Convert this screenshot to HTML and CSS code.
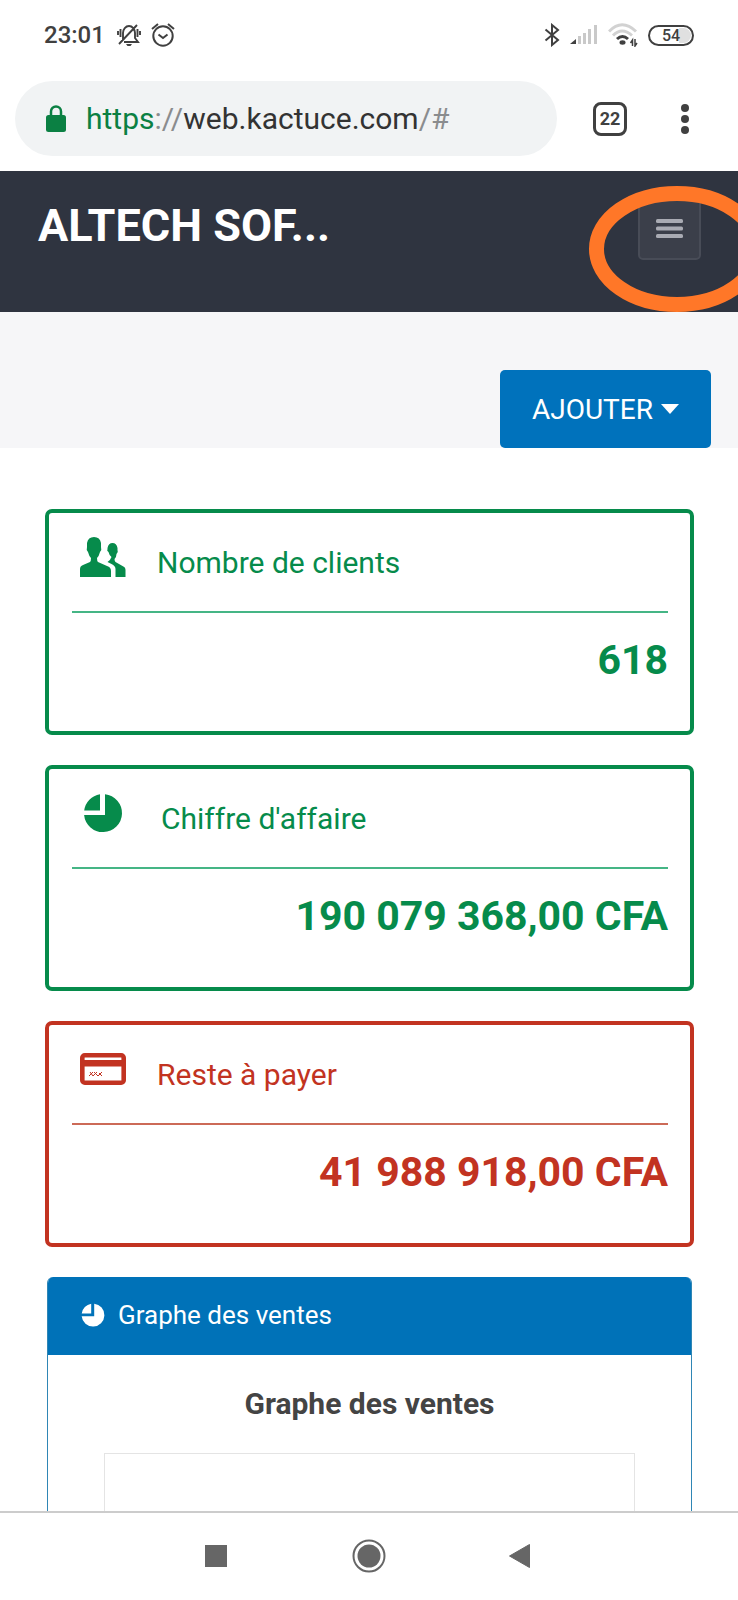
FILE: index.html
```html
<!DOCTYPE html>
<html lang="fr">
<head>
<meta charset="utf-8">
<meta name="viewport" content="width=device-width, initial-scale=1">
<title>ALTECH SOF...</title>
<link rel="stylesheet" href="styles.css">
</head>
<body>
<div class="status">
  <time class="clock">23:01</time>
  <svg class="bell" width="24" height="24" viewBox="0 0 24 24" fill="none" stroke="#404040" stroke-width="2">
    <path d="M6 18V10a6 7 0 0 1 12 0v5l3 4H7M1 8v4M3.500 6v8M20.500 6v8M23 8v4M2 21L20 2" stroke-width="1.900"/>
    <path d="M9 21h6l-1.500 2h-3z" fill="#404040" stroke="none"/>
  </svg>
  <svg class="alarm" width="24" height="24" viewBox="0 0 24 24" fill="none" stroke="#404040" stroke-width="2">
    <circle cx="12" cy="13" r="9.700"/>
    <path d="M1 6L7 1M17 1l6 5M7.500 11.500l4.500 3.500 4.500-3.500"/>
  </svg>
  <span class="status-gap"></span>
  <svg width="16" height="24" viewBox="0 0 16 24" fill="none" stroke="#404040" stroke-width="2">
    <path d="M1.500 6.500L14 17l-6 5V2l6 5L1.500 17.500"/>
  </svg>
  <svg class="signal" width="28" height="24" viewBox="0 0 28 24">
    <path fill="#404040" d="M0 21l6-5v5z"/>
    <path fill="#c9c9c9" d="M8 13h3v8H8zM13 10h3v11h-3zM18 6h3v15h-3zM24 2h3v19h-3z"/>
  </svg>
  <svg class="wifi" width="30" height="24" viewBox="0 0 30 24" fill="none">
    <path d="M1 8.500Q14-5 28 8.500M5 12.500Q14 3.500 24 12.500" stroke="#d2d2d2" stroke-width="3"/>
    <path d="M9 16Q14.500 11 20 16" stroke="#404040" stroke-width="3"/>
    <ellipse cx="14.500" cy="19.500" rx="3" ry="2.200" fill="#404040"/>
    <path d="M24.500 23v-6l-2 3M27 16v7l2-3" stroke="#404040" stroke-width="1.500"/>
  </svg>
  <span class="battery">54</span>
</div>
<div class="browser-bar">
  <a class="address" href="#">
    <svg width="20" height="27" viewBox="0 0 20 27">
      <rect y="10" width="20" height="17" rx="2.500" fill="#0b8043"/>
      <path d="M5 11V6.500a5 5 0 0 1 10 0V11" fill="none" stroke="#0b8043" stroke-width="2.500"/>
    </svg>
    <span><span class="scheme">https</span><span class="dim">://</span>web.kactuce.com<span class="dim">/#</span></span>
  </a>
  <button class="tabs" type="button" aria-label="Onglets">22</button>
  <button class="more" type="button" aria-label="Plus">
    <svg width="8" height="32" viewBox="0 0 8 32" fill="#404040"><circle cx="4" cy="5" r="4"/><circle cx="4" cy="16" r="4"/><circle cx="4" cy="27" r="4"/></svg>
  </button>
</div>
<header class="header">
  <h1 class="brand">ALTECH SOF...</h1>
  <div class="menu-wrap">
    <button class="menu" type="button" aria-label="Menu">
      <svg width="27" height="20" viewBox="0 0 27 20" fill="#a9abb3"><rect width="27" height="4" rx="1.500"/><rect y="7.500" width="27" height="4" rx="1.500"/><rect y="15" width="27" height="4" rx="1.500"/></svg>
    </button>
    <svg class="ring" width="176" height="126" viewBox="0 0 176 126"><ellipse cx="88" cy="63" rx="80.500" ry="55.500" fill="none" stroke="#ff7728" stroke-width="15"/></svg>
  </div>
</header>
<div class="toolbar">
  <button class="add" type="button">AJOUTER<svg width="18" height="10" viewBox="0 0 18 10"><path fill="#fff" d="M0 0h18L9 10z"/></svg></button>
</div>
<main class="main">
  <section class="card green">
    <div class="card-head">
      <svg class="card-icon" width="46" height="40" viewBox="0 0 46 40" fill="currentColor">
        <path d="M0 40v-8q0-3 3-4l7-3q1-1 1-4q-2-2-3-6q-2-2-1-5V6q1-6 7-6t7 6v4q1 3-1 5q-1 4-3 6q0 3 1 4l9 4q4 1 4 5v6z"/>
        <path d="M35.500 40v-8q0-3-4-5l-4-2q3-2 4-5q-2-1-3-5q-2-1-1-3V11q1-5 5-5t5 5v2q1 2-1 4q0 3-2 5q0 2 1 3l7 4q3 1 3 4v7z"/>
      </svg>
      <h2 class="card-title">Nombre de clients</h2>
    </div>
    <p class="value">618</p>
  </section>
  <section class="card green">
    <div class="card-head">
      <svg class="card-icon" width="50" height="40" viewBox="0 0 50 40" fill="currentColor">
        <path d="M20 1.200V17.500H4.200A19 19 0 0 1 20 1.200zM25 1.200A19 19 0 1 1 4.100 22H25z"/>
      </svg>
      <h2 class="card-title">Chiffre d'affaire</h2>
    </div>
    <p class="value">190 079 368,00 CFA</p>
  </section>
  <section class="card red">
    <div class="card-head">
      <svg class="card-icon" width="46" height="40" viewBox="0 0 46 40">
        <rect x="2.300" y="6.300" width="41.400" height="27.400" rx="2.500" fill="none" stroke="currentColor" stroke-width="4.600"/>
        <path fill="currentColor" d="M4 11h38v6.500H4z"/>
        <path d="M9 27l4-4M13 27l4-4M18 27l4-4M10 23l3 4M14 23l4 4M19 24l3 3" stroke="currentColor"/>
      </svg>
      <h2 class="card-title">Reste à payer</h2>
    </div>
    <p class="value">41 988 918,00 CFA</p>
  </section>
  <section class="panel">
    <div class="panel-head">
      <svg width="24" height="24" viewBox="3 0 40 40" fill="#fff">
        <path d="M20 1.200V17.500H4.200A19 19 0 0 1 20 1.200zM25 1.200A19 19 0 1 1 4.100 22H25z"/>
      </svg>
      <span>Graphe des ventes</span>
    </div>
    <h3 class="chart-title">Graphe des ventes</h3>
    <div class="chart"></div>
  </section>
</main>
<nav class="nav">
  <button type="button" aria-label="Récents"><svg width="34" height="34" viewBox="0 0 34 34"><path fill="#666" d="M5 6h22v22H5z"/></svg></button>
  <button type="button" aria-label="Accueil"><svg width="34" height="34" viewBox="0 0 34 34"><circle cx="17" cy="17" r="11.500" fill="#666"/><circle cx="17" cy="17" r="15.500" fill="none" stroke="#666" stroke-width="2"/></svg></button>
  <button type="button" aria-label="Retour"><svg width="34" height="34" viewBox="0 0 34 34"><path fill="#666" stroke="#666" stroke-linejoin="round" d="M5.500 17L25.500 5.500v23z"/></svg></button>
</nav>
</body>
</html>
```
FILE: styles.css
```css
* { box-sizing: border-box; }
body {
  margin: 0;
  min-height: 100vh;
  display: flex;
  flex-direction: column;
  background: #fff;
  font-family: Roboto, "Liberation Sans", sans-serif;
}
svg { display: block; flex: none; }
h1, h2, h3, p { margin: 0; }
button { font-family: inherit; cursor: pointer; padding: 0; border: 0; background: none; }

.status {
  display: flex;
  align-items: center;
  height: 70px;
  padding: 0 44px;
  color: #404040;
}
.clock { font-size: 24px; font-weight: 500; }
.bell { margin-left: 12px; }
.alarm { margin-left: 10px; }
.status-gap { flex: 1; }
.signal { margin-left: 10px; }
.wifi { margin-left: 10px; }
.battery {
  width: 46px;
  height: 21px;
  margin-left: 10px;
  border: 2px solid #404040;
  border-radius: 11px;
  background: linear-gradient(90deg, #fff 70%, #e0e0e0 70%) content-box;
  padding: 1px;
  font-size: 16px;
  line-height: 16px;
  font-weight: 500;
  text-align: center;
}
.browser-bar {
  display: flex;
  align-items: center;
  height: 101px;
  padding: 0 41px 4px 15px;
}
.address {
  flex: 1;
  display: flex;
  align-items: center;
  gap: 20px;
  height: 75px;
  padding: 0 31px;
  border-radius: 38px;
  background: #f1f3f4;
  color: #333;
  font-size: 30px;
  text-decoration: none;
}
.scheme { color: #0b8043; }
.dim { color: #8a8c8e; }
.tabs {
  width: 34px;
  height: 34px;
  margin-left: 36px;
  border: 3px solid #404040;
  border-radius: 8px;
  color: #404040;
  font-size: 18px;
  font-weight: 700;
  line-height: 28px;
}
.more { width: 24px; margin-left: 46px; display: flex; justify-content: center; }

.header {
  position: relative;
  overflow: hidden;
  display: flex;
  justify-content: space-between;
  align-items: flex-start;
  height: 141px;
  padding: 27px 37px 0 38px;
  background: #2f3440;
}
.brand { color: #fff; font-size: 45px; line-height: 56px; font-weight: 700; }
.menu-wrap { position: relative; }
.menu {
  width: 63px;
  height: 62px;
  display: flex;
  align-items: center;
  justify-content: center;
  border: 2px solid #484c57;
  border-radius: 5px;
  background: #3b3f4a;
}
.ring { position: absolute; left: -49px; top: -12px; pointer-events: none; }

.toolbar {
  display: flex;
  justify-content: flex-end;
  align-items: flex-end;
  height: 136px;
  padding-right: 27px;
  background: #f6f6f8;
}
.add {
  display: flex;
  align-items: center;
  gap: 8px;
  height: 78px;
  padding: 0 32px;
  border-radius: 5px;
  background: #0072bc;
  color: #fff;
  font-size: 28px;
}

.main {
  flex: 1;
  display: flex;
  flex-direction: column;
  gap: 30px;
  padding: 61px 44px 0 45px;
}
.card {
  padding: 0 22px 24px 23px;
  border: 4px solid currentColor;
  border-radius: 7px;
}
.green { color: #068b4b; }
.red { color: #c23321; }
.card-head {
  display: flex;
  align-items: center;
  gap: 31px;
  height: 100px;
  padding-left: 8px;
  border-bottom: 2px solid #45b585;
}
.red .card-head { border-color: #cc6a57; }
.card-icon { margin-bottom: 10px; }
.card-title { font-size: 30px; font-weight: 400; }
.value { font-size: 41px; line-height: 94px; font-weight: 700; text-align: right; }

.panel {
  flex: 1;
  display: flex;
  flex-direction: column;
  margin: 0 2px;
  border: solid #2f86b5;
  border-width: 0 1px;
  border-radius: 6px 6px 0 0;
  overflow: hidden;
}
.panel-head {
  display: flex;
  align-items: center;
  gap: 13px;
  height: 78px;
  padding: 0 33px 2px;
  background: #0072b8;
  color: #fff;
  font-size: 26px;
}
.chart-title { color: #444; font-size: 30px; line-height: 98px; font-weight: 700; text-align: center; }
.chart {
  flex: 1;
  margin: 0 56px;
  border: solid #e4e4e4;
  border-width: 1px 1px 0;
}
.nav {
  display: flex;
  justify-content: center;
  height: 89px;
  padding-bottom: 2px;
  border-top: 2px solid #ccc;
}
.nav button { width: 152px; display: flex; align-items: center; justify-content: center; }
```
